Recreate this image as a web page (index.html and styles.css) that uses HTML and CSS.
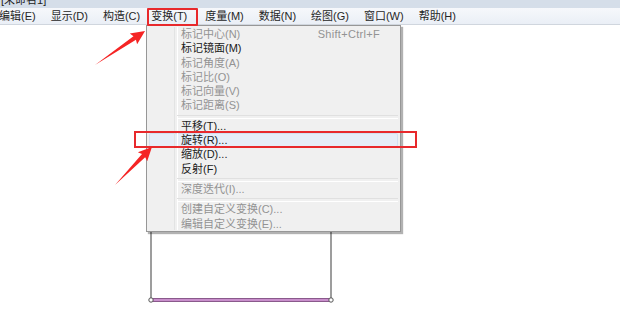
FILE: index.html
```html
<!DOCTYPE html>
<html lang="zh-CN">
<head>
  <meta charset="UTF-8">
  <title>未命名1</title>
  <link rel="stylesheet" href="styles.css">
</head>
<body>
  <div class="titlebar"><span>[未命名1]</span></div>
  <div class="menubar">
    <span class="menu-item">编辑(E)</span>
    <span class="menu-item">显示(D)</span>
    <span class="menu-item">构造(C)</span>
    <span class="menu-item open">变换(T)</span>
    <span class="menu-item">度量(M)</span>
    <span class="menu-item">数据(N)</span>
    <span class="menu-item">绘图(G)</span>
    <span class="menu-item">窗口(W)</span>
    <span class="menu-item">帮助(H)</span>
  </div>

  <div class="canvas">
    <svg class="drawing" width="620" height="284" viewBox="0 25 620 284">
      <line x1="151" y1="25" x2="151" y2="300" stroke="#7d7d7d" stroke-width="1.5"/>
      <line x1="331" y1="25" x2="331" y2="300" stroke="#7d7d7d" stroke-width="1.5"/>
      <line x1="151" y1="300" x2="331" y2="300" stroke="#8a5a8c" stroke-width="4"/>
      <line x1="151" y1="300" x2="331" y2="300" stroke="#c98fcc" stroke-width="2"/>
      <circle cx="151" cy="300" r="2.2" fill="#fff" stroke="#555" stroke-width="1"/>
      <circle cx="331" cy="300" r="2.2" fill="#fff" stroke="#555" stroke-width="1"/>
    </svg>
  </div>

  <!-- open dropdown of 变换 -->
  <div class="dropdown">
    <div class="item off"><span>标记中心(N)</span><span class="key">Shift+Ctrl+F</span></div>
    <div class="item">标记镜面(M)</div>
    <div class="item off">标记角度(A)</div>
    <div class="item off">标记比(O)</div>
    <div class="item off">标记向量(V)</div>
    <div class="item off">标记距离(S)</div>
    <div class="sep"></div>
    <div class="item">平移(T)...</div>
    <div class="item hot">旋转(R)...</div>
    <div class="item">缩放(D)...</div>
    <div class="item">反射(F)</div>
    <div class="sep"></div>
    <div class="item off">深度迭代(I)...</div>
    <div class="sep"></div>
    <div class="item off">创建自定义变换(C)...</div>
    <div class="item off">编辑自定义变换(E)...</div>
  </div>

  <div class="mark mark-menu"></div>
  <div class="mark mark-rotate"></div>

  <svg class="arrows" width="620" height="309">
    <g transform="translate(95 65) rotate(-34.2)">
      <polygon points="0,0 48,-2.2 46.5,-6.5 60.5,0 46.5,6.5 48,2.2" fill="#f52424"/>
    </g>
    <g transform="translate(115 185) rotate(-45.8)">
      <polygon points="0,0 41,-2.2 39.5,-6.5 53,0 39.5,6.5 41,2.2" fill="#f52424"/>
    </g>
  </svg>
</body>
</html>
```

FILE: styles.css
```css
* {margin: 0; padding: 0; box-sizing: border-box;}
body {
  font-family: "Liberation Sans", "Noto Sans CJK SC", sans-serif;
  font-size: 11px;
  color: #1b1b1b;
  background: #fff;
  width: 620px;
  height: 309px;
  overflow: hidden;
  position: relative;
}
.titlebar {
  height: 8px;
  overflow: hidden;
  background: #d5dee9;
}
.titlebar span {
  display: block;
  margin-top: -7px;
  padding-left: 1px;
  line-height: 14px;
  color: #222;
}
.menubar {
  height: 17px;
  display: flex;
  align-items: center;
  gap: 13px;
  margin-left: -2px;
  padding-top: 1px;
  background: linear-gradient(#f6f8fb, #eaeff6);
  border-bottom: 1px solid #d0d6de;
  white-space: nowrap;
}
.menu-item {
  line-height: 15px;
  padding: 0 1px;
  color: #262626;
}
.menu-item.open {
  margin-left: -4px;
  margin-right: 3px;
}
.canvas {
  height: 284px;
  position: relative;
}
.drawing {
  position: absolute;
  left: 0;
  top: 0;
}
.dropdown {
  position: absolute;
  left: 146px;
  top: 25px;
  width: 255px;
  height: 207px;
  padding: 1px 2px 1px 2px;
  background: #f0f0f0;
  border: 1px solid #979797;
  box-shadow: 2px 2px 1px rgba(0,0,0,0.3);
}
.dropdown::before {
  content: "";
  position: absolute;
  left: 27px;
  top: 1px;
  bottom: 1px;
  width: 2px;
  border-left: 1px solid #e2e3e3;
  border-right: 1px solid #fff;
}
.item {
  height: 14.3px;
  line-height: 14.3px;
  padding-left: 32px;
  padding-right: 18px;
  display: flex;
  justify-content: space-between;
  white-space: nowrap;
}
.item.off {
  color: #939393;
}
.item.hot {
  background: #e6edf7;
  box-shadow: inset 0 0 0 1px #d3e0f0;
  border-radius: 2px;
}
.key {
  color: #939393;
  letter-spacing: 0.3px;
}
.sep {
  height: 6px;
  margin-left: 28px;
  position: relative;
}
.sep::after {
  content: "";
  position: absolute;
  left: 0;
  right: 0;
  top: 2px;
  height: 2px;
  border-top: 1px solid #e0e0e0;
  border-bottom: 1px solid #fff;
}
.mark {
  position: absolute;
  border: 2px solid #e8292c;
}
.mark-menu {
  left: 147px;
  top: 8px;
  width: 51px;
  height: 18px;
  border-radius: 1px;
}
.mark-rotate {
  left: 134px;
  top: 131px;
  width: 283px;
  height: 17px;
}
.arrows {
  position: absolute;
  left: 0;
  top: 0;
  pointer-events: none;
}
```
